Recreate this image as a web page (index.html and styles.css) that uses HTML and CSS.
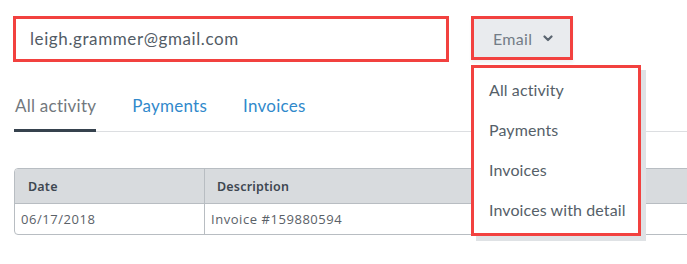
FILE: index.html
```html
<!DOCTYPE html>
<html>
<head>
<meta charset="utf-8">
<link rel="stylesheet" href="styles.css">
</head>
<body>
<div class="page">
  <div class="toolbar">
    <div class="search">leigh.grammer@gmail.com</div>
    <div class="select">
      <span>Email</span>
      <svg class="chev" width="10" height="7" viewBox="0 0 10 7"><path d="M1.5 1.5 L5 5 L8.5 1.5" fill="none" stroke="#5b6570" stroke-width="2.2" stroke-linecap="round" stroke-linejoin="round"/></svg>
    </div>
  </div>
  <div class="tabs">
    <div class="tab active">All activity</div>
    <div class="tab">Payments</div>
    <div class="tab">Invoices</div>
  </div>
  <div class="table">
    <div class="row head">
      <div class="cell c1">Date</div>
      <div class="cell c2">Description</div>
      <div class="cell c3"></div>
    </div>
    <div class="row">
      <div class="cell c1">06/17/2018</div>
      <div class="cell c2">Invoice #159880594</div>
      <div class="cell c3"></div>
    </div>
  </div>
  <div class="menu">
    <div class="item">All activity</div>
    <div class="item">Payments</div>
    <div class="item">Invoices</div>
    <div class="item">Invoices with detail</div>
  </div>
</div>
</body>
</html>
```
FILE: styles.css
```css
html, body { margin: 0; padding: 0; background: #fff; }
body { width: 687px; height: 264px; overflow: hidden; font-family: Lato, "Open Sans", sans-serif; }
.page { position: relative; padding: 16px 0 0 13px; }
.toolbar { display: flex; gap: 22px; align-items: flex-start; }
.search {
  box-sizing: border-box; width: 436px; height: 46px;
  border: 3px solid #f2413f; padding-left: 14px; padding-bottom: 2px;
  display: flex; align-items: center;
  font-size: 17px; letter-spacing: 0.6px; color: #535c66;
}
.select {
  box-sizing: border-box; width: 102px; height: 44px;
  border: 3px solid #f2413f; background: #e9ebee;
  display: flex; align-items: center; padding-left: 19px; gap: 11px;
  font-size: 16px; letter-spacing: 0.3px; color: #737c86;
  box-shadow: 0 3px 3px rgba(0,0,0,0.05);
}
.chev { margin-top: 1px; }
.tabs {
  display: flex; margin-top: 29px; margin-left: 1px;
  border-bottom: 1px solid #dcdee1;
}
.tab {
  font-size: 17px; letter-spacing: 0.25px; color: #3189cb; padding: 4px 0 13px 0; margin-right: 36px;
  border-bottom: 3px solid transparent; margin-bottom: -1px;
}
.tab:first-child { padding-left: 1px; }
.tab.active { color: #72787d; border-bottom-color: #36424e; }
.table {
  margin-top: 36px; margin-left: 1px; width: 720px;
  border: 1px solid #b8bdc2; border-radius: 4px 0 0 4px;
  overflow: hidden;
}
.row { display: flex; height: 30px; }
.row.head { height: 34px; background: #d8dbde; border-bottom: 1px solid #b8bdc2; }
.cell { display: flex; align-items: center; font-size: 13px; letter-spacing: 0.55px; color: #5a6168; font-family: "Open Sans", sans-serif; }
.head .cell { font-weight: 600; color: #3e4751; font-family: "Noto Sans", sans-serif; font-size: 12.5px; letter-spacing: 0.2px; }
.c1 { width: 183px; padding-left: 6px; border-right: 1px solid #b8bdc2; }
.head .c1 { padding-left: 13px; width: 176px; }
.c2 { width: 290px; padding-left: 6px; }
.head .c2 { padding-left: 12px; width: 284px; }
.c3 { flex: 1; }
.menu {
  position: absolute; left: 471px; top: 65px;
  box-sizing: border-box; width: 170px; height: 171px;
  border: 3px solid #f2413f; background: #fff;
  box-shadow: 5px 5px 0 #dfe2e5;
  padding: 9px 0 0 15px;
}
.item { font-size: 16px; letter-spacing: 0.1px; color: #565f69; height: 40px; line-height: 26px; }
```
